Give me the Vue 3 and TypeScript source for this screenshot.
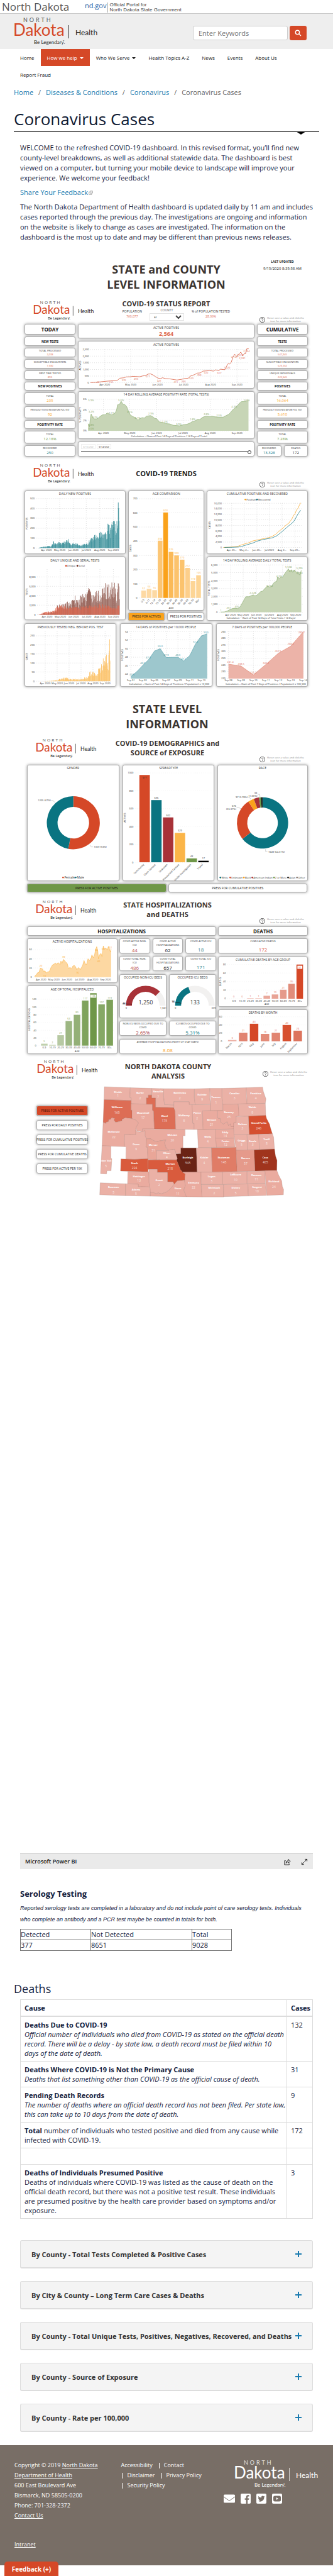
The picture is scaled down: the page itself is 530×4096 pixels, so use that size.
<script setup lang="ts">
import { h, ref } from 'vue'

/* Charts are plotted on a fine grid: one unit is KX pixels wide and KY pixels high. */
const KX = 0.338
const KY = 0.225

type Shape =
  | { t: 'line'; pts: string; c: string }
  | { t: 'area'; pts: string; base: number; c: string; fill: string }
  | { t: 'bar'; x: number; y: number; w: number; base: number; c: string; o?: number }
  | { t: 'ring'; cx: number; cy: number; r: number; r2: number; from: number; to: number; c: string }
  | { t: 'dot'; x: number; y: number; c: string }
type Mark = { x: number; y: number; s: string; c?: string; size?: number; rot?: number; anchor?: string; bold?: boolean; o?: number }
interface Spec {
  frame: [number, number, number, number]
  title: string
  titleY: number
  titleX?: number
  titleSize?: number
  span?: [number, number]
  rise?: [number, number]
  rows?: [number, string][]
  cols?: [number, string][]
  colY?: number
  rot?: number
  solid?: boolean
  shapes: Shape[]
  marks?: Mark[]
}

const Chart = (props: { spec: Spec }) => {
  const s = props.spec
  const [fx, fy, fw, fh] = s.frame
  const X = (x: number) => +((x - fx) * KX).toFixed(2)
  const Y = (y: number) => +((y - fy) * KY).toFixed(2)
  const map = (pts: string) => pts.split(' ').map((p) => { const [a, b] = p.split(',').map(Number); return `${X(a)},${Y(b)}` })
  const text = (m: Mark) => {
    const size = m.size ?? 4
    const x = X(m.x)
    const y = Y(m.y) + (m.rot ? 0 : size * 0.36)
    return h('text', {
      x, y, 'font-size': size, fill: m.c ?? '#333', 'text-anchor': m.anchor ?? 'middle', opacity: m.o ?? 1,
      'font-weight': m.bold ? 700 : 400, transform: m.rot ? `rotate(${m.rot} ${x} ${y})` : undefined,
    }, m.s)
  }
  const out: any[] = []
  const [px0, px1] = s.span ?? [0, 0]
  for (const [y, label] of s.rows ?? []) {
    out.push(h('line', { class: s.solid ? 'grid faint' : 'grid', x1: X(px0), x2: X(px1), y1: Y(y), y2: Y(y) }))
    out.push(text({ x: px0 - 7, y, s: label, anchor: 'end' }))
  }
  for (const [x, label] of s.cols ?? []) {
    if (s.rise) out.push(h('line', { class: 'grid', x1: X(x), x2: X(x), y1: Y(s.rise[0]), y2: Y(s.rise[1]) }))
    out.push(text({ x, y: s.colY ?? 0, s: label, rot: s.rot, anchor: s.rot ? 'end' : 'middle' }))
  }
  for (const g of s.shapes) {
    if (g.t === 'line') out.push(h('polyline', { points: map(g.pts).join(' '), fill: 'none', stroke: g.c, 'stroke-width': 0.7 }))
    else if (g.t === 'area') {
      const p = map(g.pts)
      const x0 = p[0].split(',')[0]
      const x1 = p[p.length - 1].split(',')[0]
      out.push(h('polygon', { points: `${x0},${Y(g.base)} ${p.join(' ')} ${x1},${Y(g.base)}`, fill: g.fill }))
      out.push(h('polyline', { points: p.join(' '), fill: 'none', stroke: g.c, 'stroke-width': 0.6 }))
    } else if (g.t === 'bar') out.push(h('rect', { x: X(g.x), y: Y(g.y), width: g.w * KX, height: Math.max(0, (g.base - g.y) * KY), fill: g.c, opacity: g.o ?? 1 }))
    else if (g.t === 'dot') out.push(h('circle', { cx: X(g.x), cy: Y(g.y), r: 1.3, fill: g.c }))
    else {
      const pt = (deg: number, r: number) => {
        const a = (deg * Math.PI) / 180
        return `${(X(g.cx) + r * Math.sin(a)).toFixed(2)} ${(Y(g.cy) - r * Math.cos(a)).toFixed(2)}`
      }
      const big = g.to - g.from > 180 ? 1 : 0
      out.push(h('path', { d: `M${pt(g.from, g.r)}A${g.r} ${g.r} 0 ${big} 1 ${pt(g.to, g.r)}L${pt(g.to, g.r2)}A${g.r2} ${g.r2} 0 ${big} 0 ${pt(g.from, g.r2)}Z`, fill: g.c }))
    }
  }
  for (const m of s.marks ?? []) out.push(text(m))
  if (s.title) out.push(text({ x: s.titleX ?? fx + fw / 2, y: s.titleY, s: s.title, size: s.titleSize ?? 5 }))
  return h('svg', { class: 'chart', viewBox: `0 0 ${(fw * KX).toFixed(1)} ${(fh * KY).toFixed(1)}`, role: 'img', 'aria-label': s.title }, out)
}

const Logo = (props: { tone?: string }) => {
  const white = props.tone === 'white'
  return h('svg', { class: 'nd-logo', viewBox: '0 0 134 46', role: 'img', 'aria-label': 'North Dakota Health' }, [
    h('text', { x: 15, y: 7, class: 'l-north', fill: white ? '#e6e2df' : '#555' }, 'NORTH'),
    h('text', { x: -1, y: 29, class: 'l-name', fill: white ? '#fff' : '#d54827' }, 'Dakota'),
    h('line', { x1: 87.5, x2: 87.5, y1: 12, y2: 33, stroke: white ? '#d8d3cf' : '#333', 'stroke-width': 1 }),
    h('text', { x: 98, y: 28, class: 'l-dept', fill: white ? '#fff' : '#222' }, 'Health'),
    h('text', { x: 32, y: 42, class: 'l-tag', fill: white ? '#fff' : '#222' }, 'Be Legendary.'),
    h('text', { x: 78, y: 38, class: 'l-tm', fill: white ? '#fff' : '#222' }, '™'),
  ])
}

const Help = () =>
  h('div', { class: 'help' }, [
    h('svg', { class: 'help-icon', viewBox: '0 0 20 20', 'aria-hidden': 'true' }, [
      h('circle', { cx: 10, cy: 10, r: 9, fill: '#fff', stroke: '#222', 'stroke-width': 1.6 }),
      h('path', { d: 'M7.2 7.8a2.8 2.8 0 1 1 4.4 2.3c-1 .7-1.6 1.1-1.6 2.2M10 14v1.6', fill: 'none', stroke: '#222', 'stroke-width': 1.5 }),
    ]),
    h('p', ['Hover over a value and click the', h('br'), 'icon for more information']),
  ])

const marks = (list: string, c?: string, size?: number): Mark[] =>
  list.split(' ').map((m) => { const [x, y, s] = m.split('|'); return { x: +x, y: +y, s, c, size } })
const months = (xs: number[]): [number, string][] =>
  xs.map((x, i) => [x, ['Apr', 'May', 'Jun', 'Jul', 'Aug', 'Sep'][i] + ' 2020'])

/* Daily columns follow a ceiling curve; `low` is how deep the quiet days fall. */
const daily = (ceiling: string, base: number, step: number, low: number, c: string, seed: number): Shape[] => {
  const p = ceiling.split(' ').map((s) => s.split(',').map(Number))
  const out: Shape[] = []
  let i = 0
  for (let x = p[0][0]; x < p[p.length - 1][0]; x += step, i++) {
    const k = Math.max(1, p.findIndex((q) => q[0] >= x))
    const [ax, ay] = p[k - 1]
    const [bx, by] = p[k]
    const top = ay + ((by - ay) * (x - ax)) / (bx - ax)
    const n = Math.abs(Math.sin(i * 12.9898 + seed) * 43758.5453) % 1
    const f = low + (1 - low) * n
    out.push({ t: 'bar', x, y: base - (base - top) * f, w: step, base, c, o: n > 0.6 ? 0.95 : 0.72 })
  }
  return out
}
const columns = (x0: number, pitch: number, w: number, base: number, unit: number, values: number[], colors: string[], markColor: string): { shapes: Shape[]; marks: Mark[] } => ({
  shapes: values.map((v, i) => ({ t: 'bar', x: x0 + i * pitch, y: base - v * unit, w, base, c: colors[i] })),
  marks: values.map((v, i) => ({ x: x0 + i * pitch + w / 2, y: base - v * unit - 16, s: String(v), c: markColor })),
})

const RED = '#d54827', TEAL = '#0a7481', GREEN = '#6f9748', AMBER = '#faa21b', WINE = '#a83238'

const active: Spec = {
  frame: [368, 374, 829, 336], title: 'ACTIVE POSITIVES', titleY: 400,
  span: [427, 1172], rise: [432, 669], colY: 684,
  rows: [[435, '2,500'], [482, '2,000'], [528, '1,500'], [576, '1,000'], [622, '500'], [669, '0']],
  cols: months([494, 616, 742, 865, 991, 1115]),
  shapes: [{ t: 'line', c: RED, pts: '427,668 460,665 490,660 520,656 545,654 555,650 565,637 585,634 595,628 615,627 625,624 650,626 658,627 675,620 688,617 697,608 710,607 720,614 733,627 743,636 755,640 765,634 780,640 800,642 820,647 833,650 855,645 870,639 887,637 895,623 915,612 930,601 943,600 955,587 975,585 985,583 1005,587 1015,578 1030,584 1037,573 1050,576 1058,577 1065,555 1073,535 1080,538 1088,525 1095,492 1104,468 1115,485 1125,464 1133,453 1142,480 1150,462 1155,465 1161,430 1170,430' }],
  marks: [
    ...marks('462|665|40 523|665|132 584|650|376 641|642|490 697|624|671 750|656|321 828|665|211 864|660|300 901|638|520 938|615|769 970|600|922 1032|602|917 1068|564|1,320 1103|487|2,147 1130|472|2,312 1140|497|2,031 1160|447|2,564', '#dd6b55'),
    { x: 384, y: 548, s: 'ACTIVES', rot: -90 },
  ],
}
const positivity: Spec = {
  frame: [368, 726, 829, 338], title: '14 DAY ROLLING AVERAGE POSITIVITY RATE (TOTAL TESTS)', titleY: 751,
  span: [416, 1172], rise: [783, 1005], colY: 1020,
  rows: [[783, '6%'], [857, '4%'], [931, '2%'], [1005, '0%']],
  cols: months([488, 611, 738, 862, 989, 1115]),
  shapes: [{ t: 'area', base: 1005, c: '#84a868', fill: '#c7d5b6', pts: '416,955 422,978 426,920 430,887 436,905 444,921 455,921 463,917 470,906 483,893 497,892 505,879 515,888 527,892 538,886 545,873 550,855 554,822 563,819 571,797 580,818 588,820 597,835 605,865 614,893 625,904 640,914 650,930 660,918 670,912 680,915 690,902 708,898 718,904 728,917 738,920 750,942 765,946 780,954 800,957 815,966 845,970 865,962 880,959 895,950 905,940 915,938 930,924 940,926 955,909 970,902 990,905 997,902 1008,906 1030,909 1050,909 1065,897 1078,888 1092,862 1104,846 1115,832 1125,813 1135,800 1150,798 1160,795 1169,794' }],
  marks: [
    ...marks('430|791|5.9% 571|791|5.6% 431|872|3.2% 448|909|2.2% 525|879|3.1% 612|876|3.1% 648|915|2.1% 711|884|2.9% 776|939|1.4% 842|957|0.9% 907|924|1.8% 972|887|2.8% 1031|897|2.5% 1102|834|4.3% 1162|791|5.8% 430|963|0.8% 430|990|0.0%', '#7fa35f'),
    { x: 384, y: 893, s: '% POSITIVITY', rot: -90 },
    { x: 796, y: 1044, s: 'Calculation = (Sum of Past 14 Days of Positives / 14 Days of Tests)' },
  ],
}
const newPositives: Spec = {
  frame: [117, 225, 474, 446], title: 'DAILY NEW POSITIVES', titleY: 249,
  span: [171, 564], rise: [282, 630], colY: 644,
  rows: [[282, '500'], [351, '400'], [420, '300'], [491, '200'], [561, '100'], [630, '0']],
  cols: months([220, 282, 346, 407, 470, 534]),
  shapes: daily('180,630 190,625 205,618 240,614 248,600 253,566 258,605 270,578 290,595 305,580 320,562 330,600 352,585 375,612 400,598 415,590 421,560 440,545 450,520 465,515 483,505 494,490 502,550 508,440 515,455 520,500 527,370 531,470 535,380 541,385 546,510 550,395 554,420 556,300 558,330 562,468', 630, 2.1, 0.5, '#0a7481', 1),
  marks: [{ x: 131, y: 458, s: 'POSITIVES', rot: -90 }],
}
const ages = [52, 64, 55, 404, 603, 325, 300, 270, 212, 119, 160]
const ageBars = columns(665, 25.6, 22, 976, 0.991, ages, ['#fdd9a3', '#fdd9a3', '#fdd9a3', '#fcc675', AMBER, '#fbba58', '#fcc36d', '#fcc36d', '#fdcf8b', '#fdd595', '#fdd595'], '#fbb040')
const ageCompare: Spec = {
  frame: [604, 225, 356, 838], title: 'AGE COMPARISON', titleY: 249, span: [654, 952], colY: 990, rot: -50,
  rows: [[282, '700'], [381, '600'], [480, '500'], [580, '400'], [679, '300'], [777, '200'], [877, '100'], [976, '0']],
  cols: ['0-5', '6-11', '12-14', '15-19', '20-29', '30-39', '40-49', '50-59', '60-69', '70-79', '80+'].map((s, i) => [680 + i * 25.6, s]),
  shapes: ageBars.shapes,
  marks: [...ageBars.marks, { x: 620, y: 630, s: 'CASES', rot: -90 }, { x: 805, y: 1044, s: 'AGE' }],
}
const cumulative: Spec = {
  frame: [972, 225, 473, 446], title: 'CUMULATIVE POSITIVES AND RECOVERED', titleY: 249,
  span: [1050, 1416], rise: [314, 625], colY: 644,
  rows: [[314, '16,000'], [353, '14,000'], [392, '12,000'], [431, '10,000'], [470, '8,000'], [509, '6,000'], [548, '4,000'], [587, '2,000'], [625, '0']],
  cols: [[1089, 'Apr 20…'], [1147, 'May 2…'], [1207, 'Jun 20…'], [1265, 'Jul 2020'], [1325, 'Aug 2…'], [1385, 'Sep 20…']],
  shapes: [
    { t: 'line', c: AMBER, pts: '1050,625 1080,623 1100,620 1120,616 1133,608 1150,600 1168,593 1188,579 1205,574 1235,564 1262,556 1278,548 1295,532 1310,512 1330,488 1345,466 1357,454 1362,442 1370,428 1378,403 1386,387 1393,360 1400,350 1406,328 1412,312' },
    { t: 'line', c: TEAL, pts: '1055,625 1090,624 1120,622 1135,618 1150,611 1170,602 1190,593 1207,581 1235,570 1255,564 1280,557 1300,543 1320,520 1340,494 1360,468 1375,450 1385,430 1395,402 1403,382 1412,363' },
    { t: 'dot', x: 1153, y: 288, c: AMBER }, { t: 'dot', x: 1208, y: 288, c: TEAL },
  ],
  marks: [{ x: 990, y: 468, s: 'CASES', rot: -90 }, { x: 1158, y: 288, s: 'Positives', anchor: 'start' }, { x: 1213, y: 288, s: 'Recovered', anchor: 'start' }],
}
const tests: Spec = {
  frame: [117, -89, 474, 450], title: 'DAILY UNIQUE AND SERIAL TESTS', titleY: -62,
  span: [176, 564], rise: [0, 320], colY: 336,
  rows: [[54, '8,000'], [120, '6,000'], [186, '4,000'], [253, '2,000'], [321, '0']],
  cols: months([223, 285, 348, 409, 471, 534]),
  shapes: [
    ...daily('190,320 205,310 265,290 270,250 285,248 295,233 315,226 330,235 345,205 355,180 362,215 370,205 380,172 400,178 422,118 432,150 445,130 460,165 470,120 485,125 494,83 500,120 508,62 516,115 525,55 532,120 541,75 548,160 556,2 558,40 562,180', 321, 2.1, 0.42, '#7c3a2d', 4),
    ...daily('180,320 190,315 205,302 220,298 235,292 255,290 270,255 290,250 310,258 330,270 350,262 380,262 410,242 440,256 470,240 500,250 530,262 562,250', 321, 2.1, 0.55, '#e2674e', 2),
    { t: 'dot', x: 312, y: -24, c: RED }, { t: 'dot', x: 365, y: -24, c: '#6a2315' },
  ],
  marks: [{ x: 131, y: 160, s: 'TESTS', rot: -90 }, { x: 317, y: -24, s: 'Unique', anchor: 'start' }, { x: 370, y: -24, s: 'Serial', anchor: 'start' }],
}
const rolling: Spec = {
  frame: [972, -89, 473, 450], title: '14 DAY ROLLING AVERAGE DAILY TOTAL TESTS', titleY: -62,
  span: [1030, 1422], rise: [-30, 302], colY: 318,
  rows: [[-30, '6,000'], [24, '5,000'], [81, '4,000'], [135, '3,000'], [191, '2,000'], [247, '1,000'], [302, '0']],
  cols: months([1084, 1143, 1205, 1265, 1327, 1389]),
  shapes: [{ t: 'area', base: 302, c: '#84a868', fill: '#c7d5b6', pts: '1037,301 1055,300 1070,292 1080,284 1095,275 1110,275 1115,277 1125,270 1132,255 1145,220 1155,193 1170,193 1180,186 1190,180 1197,186 1205,184 1215,172 1225,156 1233,155 1245,134 1258,117 1265,125 1275,122 1283,102 1290,90 1300,85 1304,54 1312,65 1322,52 1327,56 1338,30 1348,10 1355,-3 1361,18 1368,3 1375,22 1383,5 1390,20 1400,18 1408,40 1415,8' }],
  marks: [
    ...marks('1038|288|1 1075|273|251 1113|262|405 1188|164|2,228 1266|115|3,154 1312|51|4,292 1355|-18|5,508 1372|12|5,091 1407|-6|5,295 1407|28|4,765', '#7fa35f'),
    { x: 988, y: 135, s: 'TOTAL TESTS', rot: -90 },
    { x: 1226, y: 342, s: 'Calculation = (Sum of Past 14 Days of Total Tests / 14 Days)' },
  ],
}
const prevNeg: Spec = {
  frame: [117, 377, 431, 449], title: 'PREVIOUSLY TESTED NEG. BEFORE POS. TEST', titleY: 403,
  span: [171, 520], rise: [435, 785], colY: 801,
  rows: [[465, '250'], [529, '200'], [593, '150'], [657, '100'], [720, '50'], [785, '0']],
  cols: months([214, 270, 326, 382, 438, 495]),
  shapes: daily('205,785 240,782 270,776 285,765 305,756 330,766 360,768 380,768 400,755 415,745 421,708 440,712 460,700 467,690 472,635 480,670 488,575 492,660 497,562 503,580 506,690 510,580 514,432 516,500 519,610', 785, 2, 0.4, '#fbb13f', 3),
  marks: [{ x: 131, y: 610, s: 'CASES', rot: -90 }],
}
const per10k: Spec = {
  frame: [566, 377, 432, 449], title: '14 DAYS of POSITIVES per 10,000 PEOPLE', titleY: 403,
  span: [610, 982], rise: [435, 767], colY: 779,
  rows: [[435, '54'], [495, '52'], [556, '50'], [616, '48'], [676, '46'], [736, '44']],
  cols: [[617, 'Sep 01'], [673, 'Sep 03'], [728, 'Sep 05'], [783, 'Sep 07'], [838, 'Sep 09'], [894, 'Sep 11'], [949, 'Sep 13']],
  shapes: [{ t: 'area', base: 767, c: '#4a9ba6', fill: '#9dc7cd', pts: '617,753 645,718 673,674 700,634 728,573 755,556 783,619 838,616 866,643 894,604 921,522 949,466 976,451' }],
  marks: [
    ...marks('623|738|43.5 672|660|46.0 699|621|47.3 755|540|50.0 783|603|47.9 838|603|48.0 865|629|47.1 921|510|51.2 971|443|53.5', '#3b929d'),
    { x: 581, y: 601, s: 'POSITIVES', rot: -90 },
    { x: 797, y: 807, s: 'Calculation = (Sum of Past 14 Days of Positives / Population) x 10,000' },
  ],
}
const per100k: Spec = {
  frame: [1015, 377, 432, 449], title: '7 DAYS of POSITIVES per 100,000 PEOPLE', titleY: 403,
  span: [1066, 1430], rise: [435, 766], colY: 779,
  rows: [[435, '290'], [482, '280'], [529, '270'], [576, '260'], [624, '250'], [672, '240'], [717, '230'], [765, '220']],
  cols: [[1073, 'Sep 08'], [1132, 'Sep 09'], [1190, 'Sep 10'], [1249, 'Sep 11'], [1307, 'Sep 12'], [1366, 'Sep 13'], [1424, 'Sep 14']],
  shapes: [{ t: 'area', base: 767, c: '#e27f6a', fill: '#ecb3a8', pts: '1073,665 1132,679 1190,741 1249,667 1307,589 1366,538 1425,436' }],
  marks: [
    ...marks('1082|651|241.4 1132|663|238.5 1190|726|225.2 1249|657|240.2 1307|576|257.5 1366|522|268.5 1416|443|289.7', '#e0705a'),
    { x: 1030, y: 601, s: 'POSITIVES', rot: -90 },
    { x: 1248, y: 807, s: 'Calculation = (Sum of Past 7 Days of Positives / Population) x 100,000' },
  ],
}
const gender: Spec = {
  frame: [127, 546, 432, 819], title: 'GENDER', titleY: 571,
  shapes: [
    { t: 'ring', cx: 344, cy: 954, r: 42, r2: 25, from: 0, to: 191, c: RED },
    { t: 'ring', cx: 344, cy: 954, r: 42, r2: 25, from: 191, to: 360, c: TEAL },
    { t: 'line', c: '#bbb', pts: '240,798 249,798 258,812' }, { t: 'line', c: '#bbb', pts: '421,1110 428,1124 436,1124' },
    { t: 'dot', x: 296, y: 1339, c: RED }, { t: 'dot', x: 355, y: 1339, c: TEAL },
  ],
  marks: [
    { x: 238, y: 798, s: '1205 (47%)', anchor: 'end' }, { x: 440, y: 1125, s: '1359 (53%)', anchor: 'start' },
    { x: 302, y: 1340, s: 'Female', anchor: 'start', size: 5 }, { x: 361, y: 1340, s: 'Male', anchor: 'start', size: 5 },
  ],
}
const spreadBars = columns(655, 55.2, 49, 1232, 0.6285, [977, 696, 502, 329, 43, 17], [RED, TEAL, WINE, '#fbb548', GREEN, '#000'], '#333')
spreadBars.marks[0].y = 636
const spread: Spec = {
  frame: [576, 546, 432, 819], title: 'SPREADTYPE', titleY: 571, span: [634, 998], colY: 1250, rot: -45, solid: true,
  rows: [[603, '1000'], [729, '800'], [855, '600'], [981, '400'], [1107, '200'], [1233, '0']],
  cols: ['Community', 'Close Contact', 'Unknown', 'Household Contact', 'Under Investigation', 'Travel'].map((s, i) => [678 + i * 55.2, s]),
  shapes: spreadBars.shapes,
  marks: [...spreadBars.marks, { x: 592, y: 918, s: 'ACTIVES', rot: -90 }],
}
const raceCuts: [number, number, string][] = [[0, 231.5, TEAL], [231.5, 326.5, RED], [326.5, 340, AMBER], [340, 352, WINE], [352, 356.5, GREEN], [356.5, 360, '#111']]
const race: Spec = {
  frame: [1023, 546, 424, 819], title: 'RACE', titleY: 571,
  shapes: [
    ...raceCuts.map(([from, to, c]): Shape => ({ t: 'ring', cx: 1235, cy: 956, r: 40.7, r2: 24.3, from, to, c })),
    { t: 'line', c: '#bbb', pts: '1113,847 1124,847 1134,858' }, { t: 'line', c: '#bbb', pts: '1167,774 1174,776 1180,790' },
    { t: 'line', c: '#bbb', pts: '1213,755 1222,755 1223,772' }, { t: 'line', c: '#bbb', pts: '1249,1142 1250,1160 1258,1160' },
    ...([[1037, TEAL], [1083, RED], [1147, AMBER], [1187, WINE], [1289, GREEN], [1355, '#111'], [1397, '#8a7a72']] as [number, string][]).map(([x, c]): Shape => ({ t: 'dot', x, y: 1341, c })),
  ],
  marks: [
    { x: 1210, y: 744, s: '34', anchor: 'end' }, { x: 1210, y: 766, s: '(1.33%)', anchor: 'end' }, { x: 1165, y: 774, s: '97 (3.78%)', anchor: 'end' },
    { x: 1111, y: 837, s: '676', anchor: 'end' }, { x: 1111, y: 858, s: '(26.37%)', anchor: 'end' }, { x: 1262, y: 1161, s: '1649 (64.31%)', anchor: 'start' },
    ...([[1042, 'White'], [1088, 'Unknown'], [1152, 'Black'], [1192, 'American Indian'], [1294, '2 or More'], [1360, 'Asian'], [1402, 'Other']] as [number, string][]).map(([x, s]): Mark => ({ x, y: 1341, s, anchor: 'start' })),
  ],
}
const hospital: Spec = {
  frame: [127, 363, 427, 316], title: 'ACTIVE HOSPITALIZATIONS', titleY: 388, span: [157, 528], colY: 654, solid: true,
  rows: [[443, '60'], [508, '40'], [573, '20'], [638, '0']], cols: months([193, 254, 316, 376, 437, 498]),
  shapes: [{ t: 'area', base: 638, c: '#fbb13f', fill: '#fdd8a2', pts: '164,636 165,628 172,618 178,605 183,606 190,574 200,580 205,596 212,594 217,608 225,600 230,600 235,590 240,570 247,552 255,545 262,538 268,548 273,535 283,548 287,524 292,540 299,512 308,528 317,542 323,578 330,568 337,580 343,560 350,555 355,562 362,585 370,570 378,584 385,568 390,552 396,520 402,545 408,548 415,508 422,520 430,500 433,480 440,500 446,478 451,440 456,422 461,452 464,508 470,478 476,470 481,492 487,417 492,440 498,430 506,445 511,420 518,448 521,460 524,438' }],
  marks: marks('192|559|20 210|627|10 300|495|39 365|606|16 455|444|66 465|527|40 487|438|68 521|430|62', '#faa932'),
}
const hospAge = columns(193, 38.6, 31, 1118, 2.73, [5, 2, 27, 64, 80, 117, 136, 107, 119], ['#c0d0ad', '#c0d0ad', '#b7c9a3', '#9db783', '#94b077', '#7fa35c', GREEN, '#86a866', '#7da159'], '#7fa35f')
hospAge.shapes.push({ t: 'bar', x: 426, y: 757, w: 28, base: 778, c: '#fff' })
hospAge.marks[6].y = 768
const hospitalAge: Spec = {
  frame: [127, 692, 427, 485], title: 'AGE OF TOTAL HOSPITALIZED', titleY: 718, span: [178, 538], colY: 1133, solid: true,
  rows: [[790, '120'], [845, '100'], [900, '80'], [954, '60'], [1009, '40'], [1064, '20'], [1119, '0']],
  cols: ['0-9', '10-19', '20-29', '30-39', '40-49', '50-59', '60-69', '70-79', '80+'].map((s, i) => [208 + i * 38.6, s]),
  shapes: hospAge.shapes,
  marks: [...hospAge.marks, { x: 142, y: 933, s: 'HOSPITALIZATIONS', rot: -90 }, { x: 364, y: 1157, s: 'AGE' }],
}
const gauge = (x: number, cx: number, title: string, share: number, tick: number, c: string, value: string, max: string, low: string): Spec => ({
  frame: [x, 616, 222, 309], title, titleY: 638,
  shapes: [
    { t: 'ring', cx, cy: 838, r: 31.5, r2: 22, from: -90, to: 90, c: '#f2f1f0' },
    { t: 'ring', cx, cy: 838, r: 31.5, r2: 22, from: -90, to: -90 + 180 * share, c },
    { t: 'ring', cx, cy: 838, r: 31.5, r2: 22, from: -90.5 + 180 * tick, to: -89 + 180 * tick, c: '#111' },
  ],
  marks: [
    { x: cx, y: 815, s: value, size: 9 }, { x: cx - 92, y: 854, s: '0' }, { x: cx + 98, y: 854, s: max, anchor: 'end' },
    { x: cx - 96, y: low === '44' ? 822 : 808, s: low, bold: true, anchor: 'end' },
  ],
})
const gaugeA = gauge(564, 688, 'OCCUPIED NON-ICU BEDS', 0.7526, 0.0265, WINE, '1,250', '1,661', '44')
const gaugeB = gauge(798, 920, 'OCCUPIED ICU BEDS', 0.392, 0.053, TEAL, '133', '339', '18')
const dAge = columns(1089, 38.8, 31, 785, 3.02, [0, 0, 1, 1, 7, 10, 21, 35, 80], ['#ecb1a6', '#ecb1a6', '#ecb1a6', '#ecb1a6', '#eaa99c', '#e8a395', '#e59a8b', '#e18c7a', RED], '#e0705a')
dAge.shapes.push({ t: 'bar', x: 1404, y: 552, w: 23, base: 574, c: '#fff' })
dAge.marks[8].y = 563
dAge.marks[8].s = '97'
const deathsAge: Spec = {
  frame: [1030, 487, 423, 357], title: 'CUMULATIVE DEATHS BY AGE GROUP', titleY: 511, span: [1074, 1446], colY: 800, solid: true,
  rows: [[543, '80'], [603, '60'], [664, '40'], [724, '20'], [784, '0']],
  cols: ['0-9', '10-19', '20-29', '30-39', '40-49', '50-59', '60-69', '70-79', '80+'].map((s, i) => [1105 + i * 38.8, s]),
  shapes: dAge.shapes,
  marks: [...dAge.marks, { x: 1046, y: 665, s: 'DEATHS', rot: -90 }, { x: 1260, y: 825, s: 'AGE' }],
}
const dMonth = columns(1077, 51.4, 40, 1086, 2.87, [3, 21, 43, 18, 21, 40, 26], ['#ecb1a6', '#e18471', RED, '#e38c79', '#e18471', '#d7502f', '#dd745d'], '#e0604a')
const deathsMonth: Spec = {
  frame: [1030, 861, 423, 316], title: 'DEATHS BY MONTH', titleY: 884, span: [1056, 1446], colY: 1104, rot: -45, solid: true,
  rows: [[913, '60'], [971, '40'], [1028, '20'], [1086, '0']],
  cols: ['March', 'April', 'May', 'June', 'July', 'August', 'September'].map((s, i) => [1096 + i * 51.4, s]),
  shapes: dMonth.shapes, marks: dMonth.marks,
}

type Stat = { label: string; value?: string; tone?: string }
const today: Stat[] = [
  { label: 'TODAY', tone: 'big' }, { label: 'NEW TESTS', tone: 'head' },
  { label: 'TOTAL PROCESSED', value: '2,038', tone: 'red' }, { label: 'SUSCEPTIBLE ENCOUNTERS', value: '1,930', tone: 'red' },
  { label: 'FIRST TIME TESTED', value: '890', tone: 'red' }, { label: 'NEW POSITIVES', tone: 'head' },
  { label: 'TOTAL', value: '235', tone: 'amber mid' }, { label: 'PREVIOUSLY TESTED NEG BEFORE POS. TEST', value: '92', tone: 'amber mid tight' },
  { label: 'POSITIVITY RATE', tone: 'head' }, { label: 'TOTAL', value: '12.18%', tone: 'green mid' }, { label: 'RECOVERED', value: '250', tone: 'teal mid' },
]
const overall: Stat[] = [
  { label: 'CUMULATIVE', tone: 'big' }, { label: 'TESTS', tone: 'head' },
  { label: 'TOTAL PROCESSED', value: '547,945', tone: 'red' }, { label: 'SUSCEPTIBLE ENCOUNTERS', value: '529,202', tone: 'red' },
  { label: 'UNIQUE INDIVIDUALS', value: '220,645', tone: 'red' }, { label: 'POSITIVES', tone: 'head' },
  { label: 'TOTAL', value: '16,064', tone: 'amber mid' }, { label: 'PREVIOUSLY TESTED NEG BEFORE POS. TEST', value: '5,610', tone: 'amber mid tight' },
  { label: 'POSITIVITY RATE', tone: 'head' }, { label: 'TOTAL', value: '7.28%', tone: 'green mid' },
]
const beds: Stat[] = [
  { label: 'COVID ACTIVE NON-ICU', value: '44', tone: 'rose' }, { label: 'COVID ACTIVE HOSPITALIZATIONS', value: '62', tone: 'dark' }, { label: 'COVID ACTIVE ICU', value: '18', tone: 'sea' },
  { label: 'COVID TOTAL NON-ICU', value: '486', tone: 'rose' }, { label: 'COVID TOTAL HOSPITALIZATIONS', value: '657', tone: 'dark' }, { label: 'COVID TOTAL ICU', value: '171', tone: 'sea' },
]

/* name | value | label x | label y | outline | fill */
const L = '#ebb1a6', M = '#eaab9f'
const counties: [string, string, number, number, string, string][] = [
  ['Divide', '1', 556, 302, '492,264 614,271 612,340 618,342 618,362 490,355', L],
  ['Burke', '2', 660, 308, '614,271 715,276 715,323 699,323 699,343 690,343 690,388 618,385 618,342 612,340', L],
  ['Renville', '7', 745, 300, '715,276 771,278 771,330 775,390 819,393 819,412 733,409 733,345 715,345', L],
  ['Bottineau', '2', 847, 308, '771,278 916,279 916,345 920,391 891,390 891,370 819,370 819,393 775,390 771,330', L],
  ['Rolette', '9', 952, 320, '916,279 988,276 988,345 992,389 920,391 916,345', L],
  ['Towner', '1', 1018, 340, '988,276 1046,276 1046,345 1050,388 1050,433 992,433 992,345', L],
  ['Cavalier', '3', 1105, 311, '1046,276 1160,271 1160,325 1164,385 1050,388 1046,345', L],
  ['Pembina', '4', 1205, 311, '1160,271 1237,266 1241,300 1253,350 1250,382 1164,385', L],
  ['Williams', '165', 552, 410, '490,355 618,362 618,430 622,430 622,490 590,484 575,495 575,505 545,517 537,500 540,488 527,485 520,495 512,498 512,510 500,517 500,525 486,515', '#dd6d55'],
  ['Mountrail', '17', 674, 449, '618,385 718,388 718,430 724,435 727,562 671,563 671,583 645,575 640,555 652,520 640,500 622,490 622,430 618,430', M],
  ['Ward', '175', 775, 470, '699,323 715,323 715,345 733,345 733,409 819,412 825,435 828,565 727,562 724,435 718,430 718,388 690,388 690,343 699,343', '#dd6d55'],
  ['McHenry', '8', 867, 467, '819,370 891,370 891,390 905,391 908,430 908,522 914,523 914,566 828,565 825,435 819,412', L],
  ['Pierce', '2', 929, 450, '905,391 992,391 992,433 954,435 957,566 914,566 914,523 908,522', L],
  ['Benson', '21', 997, 497, '954,435 1025,434 1025,485 1040,490 1040,515 1052,528 1070,512 1077,538 1085,525 1088,545 1101,545 1101,563 957,566', M],
  ['Ramsey', '25', 1078, 444, '1050,388 1122,387 1126,430 1126,472 1112,475 1112,517 1101,519 1101,545 1088,545 1085,525 1077,538 1070,512 1052,528 1040,515 1040,490 1025,485 1025,434 1050,433', M],
  ['Walsh', '9', 1189, 410, '1122,387 1164,385 1250,382 1252,467 1170,472 1126,472', L],
  ['Grand Forks', '246', 1219, 521, '1170,472 1252,467 1256,490 1270,530 1275,560 1283,597 1174,602', '#d54f30'],
  ['Nelson', '3', 1142, 530, '1112,475 1170,472 1174,602 1103,604 1101,519 1112,517', L],
  ['McKenzie', '22', 536, 583, '486,515 500,525 500,517 512,510 512,498 520,495 527,485 540,488 537,500 545,517 575,505 575,495 590,484 622,490 640,500 652,520 640,555 640,603 588,601 586,688 481,682', M],
  ['McLean', '26', 812, 605, '671,563 828,565 872,566 872,610 862,610 862,695 852,697 852,738 829,738 822,706 795,712 783,700 775,660 782,640 770,643 733,653 710,633 690,632 683,610 683,575 671,583', M],
  ['Dunn', '9', 642, 671, '588,601 640,603 640,570 645,580 660,585 683,575 683,610 690,632 688,690 695,693 697,773 634,778 593,775 594,689 586,688', L],
  ['Mercer', '31', 722, 678, '690,632 710,633 733,653 770,643 782,640 775,660 783,700 795,712 795,716 737,716 737,780 697,778 695,693 688,690', '#e9a698'],
  ['Oliver', '4', 786, 735, '737,716 795,716 795,712 822,706 829,738 836,770 832,781 737,779', L],
  ['Wells', '4', 979, 617, '930,567 1016,566 1020,693 934,695', L],
  ['Eddy', '14', 1061, 586, '1016,566 1101,563 1103,626 1016,628', M],
  ['Foster', '12', 1063, 648, '1016,628 1103,628 1107,690 1020,693', M],
  ['Griggs', '5', 1138, 645, '1103,604 1164,603 1166,710 1112,713 1110,690', L],
  ['Steele', '3', 1190, 648, '1164,603 1219,601 1222,707 1166,710', L],
  ['Traill', '8', 1256, 638, '1219,601 1283,597 1289,620 1293,705 1222,707', L],
  ['lden Vall', '5', 500, 787, '481,682 523,684 523,770 527,773 524,858 504,858 502,881 474,879', L],
  ['Stark', '224', 634, 803, '570,774 634,778 697,773 698,866 568,860', '#d95a3c'],
  ['Burleigh', '545', 885, 767, '852,697 925,697 929,868 860,868 850,850 832,785 836,770 829,740 852,738', '#6a2315'],
  ['Kidder', '4', 962, 767, '925,697 996,695 1000,868 929,868', L],
  ['Stutsman', '145', 1054, 764, '996,695 1112,692 1117,863 1000,868', '#e07c66'],
  ['Barnes', '57', 1157, 770, '1112,713 1197,710 1202,860 1117,863', '#e59a8b'],
  ['Cass', '405', 1250, 764, '1197,710 1293,705 1298,755 1305,785 1304,856 1202,860', '#a0341d'],
  ['Morton', '218', 802, 809, '698,781 832,781 850,850 860,868 873,880 870,925 835,930 820,955 816,936 789,935 789,870 741,870 741,848 698,848', '#d95b3d'],
  ['Hettinger', '13', 655, 899, '603,863 702,867 704,950 706,973 651,970 651,953 601,950', M],
  ['Grant', '2', 750, 923, '702,848 741,848 741,870 789,870 789,935 816,936 820,955 800,990 785,1008 760,1022 745,1015 735,1022 722,1010 708,1010 706,973 702,940', L],
  ['Sioux', '11', 838, 983, '820,955 835,930 870,925 873,965 866,995 879,1042 708,1038 708,1010 722,1010 735,1022 745,1015 760,1022 785,1008 800,990', M],
  ['Emmons', '22', 912, 941, '860,868 947,868 948,955 952,1043 879,1042 866,995 873,965 870,925 873,880', M],
  ['Logan', '3', 997, 896, '947,868 1048,868 1048,955 948,955', L],
  ['LaMoure', '10', 1110, 887, '1048,868 1164,862 1164,950 1048,955', L],
  ['Ransom', '11', 1208, 890, '1164,862 1248,860 1250,947 1164,950', L],
  ['Richland', '24', 1290, 935, '1248,858 1304,856 1313,890 1327,930 1330,970 1336,990 1335,1028 1258,1032 1252,947', M],
  ['McIntosh', '2', 1009, 980, '948,955 1053,956 1054,1043 952,1043', L],
  ['Dickey', '5', 1111, 980, '1053,956 1168,951 1170,1037 1054,1041', L],
  ['Sargent', '10', 1211, 974, '1168,951 1250,947 1256,1032 1170,1037', L],
  ['Bowman', '5', 535, 974, '472,943 592,950 592,1034 470,1028', L],
  ['Adams', '5', 641, 992, '592,950 651,953 651,970 706,973 708,1038 592,1034', L],
]
const mx = (x: number) => +((x - 465) * KX).toFixed(1)
const my = (y: number) => +((y - 260) * KY).toFixed(1)
const outline = (pts: string) => pts.split(' ').map((p) => { const [x, y] = p.split(',').map(Number); return `${mx(x)},${my(y)}` }).join(' ')
const closeSet = ['Eddy', 'Foster', 'Griggs', 'Steele', 'Traill', 'Divide', 'Hettinger', 'Adams', 'Oliver', 'Nelson', 'Sargent', 'Ransom']

const nav = ['Home', 'How we help', 'Who We Serve', 'Health Topics A-Z', 'News', 'Events', 'About Us', 'Report Fraud']
const mapModes = ['ACTIVE POSITIVES', 'DAILY POSITIVES', 'CUMULATIVE POSITIVES', 'CUMULATIVE DEATHS', 'ACTIVE PER 10K']
const mapMode = ref('ACTIVE POSITIVES')
const panels = [
  'By County - Total Tests Completed & Positive Cases',
  'By City & County – Long Term Care Cases & Deaths',
  'By County - Total Unique Tests, Positives, Negatives, Recovered, and Deaths',
  'By County - Source of Exposure',
  'By County - Rate per 100,000',
]
const deaths = [
  { head: 'Deaths Due to COVID-19', note: 'Official number of individuals who died from COVID-19 as stated on the official death record. There will be a delay - by state law, a death record must be filed within 10 days of the date of death.', n: '132' },
  { head: 'Deaths Where COVID-19 is Not the Primary Cause', note: 'Deaths that list something other than COVID-19 as the official cause of death.', n: '31' },
  { head: 'Pending Death Records', note: 'The number of deaths where an official death record has not been filed. Per state law, this can take up to 10 days from the date of death.', n: '9' },
]
const keywords = ref('')
const from = ref('3/15/2020')
const until = ref('9/14/2020')
const day = ref(100)
</script>

<template>
  <div class="page">
    <div class="state-bar">
      <span class="state-name">North Dakota</span>
      <a class="ndgov" href="#">nd.gov</a>
      <span class="portal">Official Portal for<br>North Dakota State Government</span>
    </div>
    <header class="site-head">
      <a class="home-logo" href="#"><Logo /></a>
      <form class="search" @submit.prevent>
        <input v-model="keywords" type="text" placeholder="Enter Keywords" aria-label="Enter Keywords">
        <button type="submit" aria-label="Search">
          <svg viewBox="0 0 16 16"><circle cx="6.5" cy="6.5" r="4.6" /><path d="M10 10l4.5 4.5" /></svg>
        </button>
      </form>
    </header>
    <nav class="nav">
      <a v-for="(n, i) in nav" :key="n" href="#" :class="{ on: i === 1 }">{{ n }}<i v-if="i === 1 || i === 2" class="caret"></i></a>
    </nav>
    <div class="crumbs">
      <a href="#">Home</a><span>/</span><a href="#">Diseases &amp; Conditions</a><span>/</span><a href="#">Coronavirus</a><span>/</span><em>Coronavirus Cases</em>
    </div>
    <h1>Coronavirus Cases</h1>

    <section class="intro">
      <p>WELCOME to the refreshed COVID-19 dashboard. In this revised format, you’ll find new<br>county-level breakdowns, as well as additional statewide data. The dashboard is best<br>viewed on a computer, but turning your mobile device to landscape will improve your<br>experience. We welcome your feedback!</p>
      <p><a href="#">Share Your Feedback<svg class="ext" viewBox="0 0 10 10"><path d="M4 3H1v6h6V6M4 1h5v5L7.5 4.5 5 7 3 5l2.5-2.5z" /></svg></a></p>
      <p>The North Dakota Department of Health dashboard is updated daily by 11 am and includes<br>cases reported through the previous day. The investigations are ongoing and information<br>on the website is likely to change as cases are investigated. The information on the<br>dashboard is the most up to date and may be different than previous news releases.</p>
    </section>

    <main class="dash">
      <div class="lead">
        <h2 class="level">STATE and COUNTY<br>LEVEL INFORMATION</h2>
        <div class="updated"><b>LAST UPDATED</b><span>9/15/2020 8:35:58 AM</span></div>
      </div>

      <div class="dash-head first">
        <Logo />
        <div class="mid-head">
          <h3>COVID-19 STATUS REPORT</h3>
          <div class="filters">
            <div class="fact"><span>POPULATION</span><b>760,077</b></div>
            <div class="county"><label for="county">COUNTY</label><select id="county"><option>All</option></select></div>
            <div class="fact"><span>% of POPULATION TESTED</span><b>28.06%</b></div>
          </div>
        </div>
        <Help />
      </div>
      <div class="status">
        <div class="stack">
          <div v-for="(s, i) in today" :key="i" class="card stat" :class="s.tone"><span>{{ s.label }}</span><b v-if="s.value">{{ s.value }}</b></div>
        </div>
        <div class="centre">
          <div class="card now"><span>ACTIVE POSITIVES</span><b>2,564</b></div>
          <div class="card"><Chart :spec="active" /></div>
          <div class="card"><Chart :spec="positivity" /></div>
          <div class="card range">
            <div class="dates"><input v-model="from" class="dim" aria-label="From date"><input v-model="until" aria-label="To date"></div>
            <input v-model="day" type="range" min="0" max="100" aria-label="Date">
          </div>
        </div>
        <div class="stack">
          <div v-for="(s, i) in overall" :key="i" class="card stat" :class="s.tone"><span>{{ s.label }}</span><b v-if="s.value">{{ s.value }}</b></div>
          <div class="pair">
            <div class="card stat teal mid"><span>RECOVERED</span><b>13,328</b></div>
            <div class="card stat dark mid"><span>DEATHS</span><b>172</b></div>
          </div>
        </div>
      </div>

      <div class="dash-head trends-head"><Logo /><h3>COVID-19 TRENDS</h3><Help /></div>
      <div class="trends">
        <div class="col"><div class="card"><Chart :spec="newPositives" /></div><div class="card"><Chart :spec="tests" /></div></div>
        <div class="col">
          <div class="card"><Chart :spec="ageCompare" /></div>
          <div class="toggle"><button class="card amber-on">PRESS FOR ACTIVES</button><button class="card">PRESS FOR POSITIVES</button></div>
        </div>
        <div class="col"><div class="card"><Chart :spec="cumulative" /></div><div class="card"><Chart :spec="rolling" /></div></div>
      </div>
      <div class="thirds">
        <div class="card"><Chart :spec="prevNeg" /></div>
        <div class="card"><Chart :spec="per10k" /></div>
        <div class="card"><Chart :spec="per100k" /></div>
      </div>

      <h2 class="level second">STATE LEVEL<br>INFORMATION</h2>
      <div class="dash-head demo-head"><Logo /><h3>COVID-19 DEMOGRAPHICS and<br>SOURCE of EXPOSURE</h3><Help /></div>
      <div class="thirds demo">
        <div class="card"><Chart :spec="gender" /></div>
        <div class="card"><Chart :spec="spread" /></div>
        <div class="card"><Chart :spec="race" /></div>
      </div>
      <div class="halves"><button class="card green-on">PRESS FOR ACTIVE POSITIVES</button><button class="card">PRESS FOR CUMULATIVE POSITIVES</button></div>

      <div class="dash-head demo-head"><Logo /><h3>STATE HOSPITALIZATIONS<br>and DEATHS</h3><Help /></div>
      <div class="hosp">
        <div class="card bar-title wide">HOSPITALIZATIONS</div>
        <div class="card bar-title">DEATHS</div>
        <div class="col"><div class="card"><Chart :spec="hospital" /></div><div class="card"><Chart :spec="hospitalAge" /></div></div>
        <div class="col spread">
          <div class="beds">
            <div v-for="b in beds" :key="b.label" class="card bed" :class="b.tone"><span>{{ b.label }}</span><b>{{ b.value }}</b></div>
          </div>
          <div class="gauges"><div class="card"><Chart :spec="gaugeA" /></div><div class="card"><Chart :spec="gaugeB" /></div></div>
          <div class="gauges">
            <div class="card bed wine tight"><span>NON-ICU BEDS OCCUPIED DUE TO COVID</span><b>2.65%</b></div>
            <div class="card bed teal"><span>ICU BEDS OCCUPIED DUE TO COVID</span><b>5.31%</b></div>
          </div>
          <div class="card bed amber"><span>AVERAGE HOSPITALIZATION LENGTH OF STAY (DAYS)</span><b>8.08</b></div>
        </div>
        <div class="col spread">
          <div class="card bed red"><span>CUMULATIVE DEATHS</span><b>172</b></div>
          <div class="card"><Chart :spec="deathsAge" /></div>
          <div class="card"><Chart :spec="deathsMonth" /></div>
        </div>
      </div>

      <div class="dash-head map-head"><Logo /><h3>NORTH DAKOTA COUNTY<br>ANALYSIS</h3><Help /></div>
      <div class="map-row">
        <div class="modes">
          <button v-for="m in mapModes" :key="m" class="card" :class="{ 'red-on': m === mapMode }" @click="mapMode = m">PRESS FOR {{ m }}</button>
        </div>
        <svg class="map" viewBox="0 0 298 178" role="img" aria-label="North Dakota counties">
          <g v-for="c in counties" :key="c[0]"><polygon :points="outline(c[4])" :fill="c[5]" /></g>
          <g v-for="c in counties" :key="c[0]">
            <text class="cname" :x="mx(c[2])" :y="my(c[3] + 6)">{{ c[0] }}</text>
            <text class="cnum" :x="mx(c[2])" :y="my(c[3] + (closeSet.includes(c[0]) ? 35 : 44))">{{ c[1] }}</text>
          </g>
        </svg>
      </div>
    </main>

    <div class="powerbi">
      <strong>Microsoft Power BI</strong>
      <button aria-label="Share"><svg viewBox="0 0 12 12"><path d="M3 4H1v7h8V9" /><path d="M3.5 8.5C3.500 5.500 5 4 7.500 4V1.500L11 5 7.500 8V6C5.500 6 4.300 6.800 3.500 8.500z" /></svg></button>
      <button aria-label="Full screen"><svg viewBox="0 0 12 12"><path d="M1.500 10.500l9-9M7 1.500h3.500V5M1.500 7v3.500H5" /></svg></button>
    </div>

    <section class="serology">
      <h2>Serology Testing</h2>
      <p>Reported serology tests are completed in a laboratory and do not include point of care serology tests. Individuals who complete an antibody and a PCR test maybe be counted in totals for both.</p>
      <table>
        <tbody>
          <tr><td>Detected</td><td>Not Detected</td><td>Total</td></tr>
          <tr><td>377</td><td>8651</td><td>9028</td></tr>
        </tbody>
      </table>
    </section>

    <section class="deaths">
      <h2>Deaths</h2>
      <table>
        <thead><tr><th>Cause</th><th>Cases</th></tr></thead>
        <tbody>
          <tr v-for="d in deaths" :key="d.head"><td><b>{{ d.head }}</b><br><i>{{ d.note }}</i></td><td>{{ d.n }}</td></tr>
          <tr><td><b>Total</b> number of individuals who tested positive and died from any cause while infected with COVID-19.</td><td>172</td></tr>
          <tr><td>&nbsp;</td><td>&nbsp;</td></tr>
          <tr><td><b>Deaths of Individuals Presumed Positive</b><br>Deaths of individuals where COVID-19 was listed as the cause of death on the<br>official death record, but there was not a positive test result. These individuals<br>are presumed positive by the health care provider based on symptoms and/or<br>exposure.</td><td>3</td></tr>
        </tbody>
      </table>
    </section>

    <section class="panels">
      <button v-for="p in panels" :key="p"><span>{{ p }}</span><svg viewBox="0 0 10 10"><path d="M5 0v10M0 5h10" /></svg></button>
    </section>

    <footer>
      <div class="addr">
        Copyright © 2019 <a href="#">North Dakota Department of Health</a><br>600 East Boulevard Ave Bismarck, ND 58505-0200<br>Phone: 701-328-2372<br><a href="#">Contact Us</a>
        <p><a href="#">Intranet</a></p>
      </div>
      <ul>
        <li><a href="#">Accessibility</a></li><li><a href="#">Contact</a></li><li><a href="#">Disclaimer</a></li><li><a href="#">Privacy Policy</a></li><li><a href="#">Security Policy</a></li>
      </ul>
      <div class="brand">
        <Logo tone="white" />
        <div class="social">
          <a href="#" aria-label="Email"><svg viewBox="0 0 18 16"><path fill="#fff" d="M1.500 1.500h15a1.500 1.500 0 0 1 1.500 1.500v10a1.500 1.500 0 0 1-1.500 1.500h-15A1.500 1.500 0 0 1 0 13V3a1.500 1.500 0 0 1 1.500-1.500z" /><path d="M0 5l7.500 5.400q1.500 1 3 0L18 5" fill="none" stroke="#786e66" /></svg></a>
          <a href="#" aria-label="Facebook"><svg viewBox="0 0 16 16"><rect width="16" height="16" rx="2" fill="#fff" /><path fill="#786e66" d="M8.700 16V9.800H6.600V7.400h2.100V5.600c0-2.100 1.300-3.300 3.200-3.300.8 0 1.600.1 1.600.1v2.100h-1.100c-1 0-1.300.6-1.300 1.300v1.600h2.400l-.4 2.400h-2V16z" /></svg></a>
          <a href="#" aria-label="Twitter"><svg viewBox="0 0 16 16"><rect width="16" height="16" rx="2" fill="#fff" /><path fill="#786e66" d="M13.500 4.700l-1.200.3c.4-.3.800-.7.900-1.200l-1.400.5a2.300 2.300 0 0 0-3.900 2.100A6.400 6.400 0 0 1 3.200 4a2.300 2.300 0 0 0 .7 3l-1-.3c0 1.100.8 2 1.800 2.300l-1 .1c.3.900 1.100 1.500 2.100 1.600A4.600 4.600 0 0 1 2.400 11.600a6.500 6.500 0 0 0 10-5.800z" /></svg></a>
          <a href="#" aria-label="YouTube"><svg viewBox="0 0 16 16"><rect width="16" height="16" rx="2" fill="#fff" /><rect x="2" y="3.500" width="12" height="9" rx="2.500" fill="#786e66" /><path fill="#fff" d="M6.700 6l3.400 2-3.400 2z" /></svg></a>
        </div>
      </div>
    </footer>
    <button class="feedback">Feedback (+)</button>
  </div>
</template>

<style>
body { margin: 0; background: #fff; }
.chart { display: block; width: 100%; height: auto; font-family: "Open Sans", "Noto Sans", sans-serif; }
.chart .grid { stroke: #ccc; stroke-width: 1; stroke-dasharray: 1 2; stroke-opacity: .6; }
.chart .faint { stroke-opacity: .2; }
.nd-logo { display: block; width: 134px; font-family: Lato, sans-serif; overflow: visible; }
.l-north { font-size: 9px; font-weight: 400; letter-spacing: 3px; }
.l-name { font-size: 26px; }
.l-dept { font-size: 12px; }
.l-tag { font-size: 8px; }
.l-tm { font-size: 3px; }
.help { display: flex; align-items: center; gap: 3px; color: #888; }
.help p { margin: 0; font-size: 4px; line-height: 5px; text-align: center; white-space: nowrap; }
.help-icon { width: 9px; height: 9px; }
</style>

<style scoped>
.page { position: relative; padding-bottom: 19px; font: 11px/16px "Open Sans", "Noto Sans", sans-serif; color: #14213d; background: #fff; }
a { color: #1a7bb0; text-decoration: none; }
button, input, select { font-family: inherit; }
h1, h2, h3, p { margin: 0; }

.state-bar { display: flex; height: 21px; border-bottom: 1px solid #c9c9c9; align-items: center; padding-left: 3px; }
.state-name { font-size: 17px; line-height: 20px; color: #555; width: 132px; }
.ndgov { font-size: 11px; line-height: 12px; color: #2c62a5; padding-right: 2px; align-self: flex-start; margin-top: 3px; }
.portal { font: 8px/8px "Liberation Sans", Arial, sans-serif; color: #444; border-left: 1px solid #aaa; padding-left: 2px; margin-top: 3px; }
.site-head { display: flex; justify-content: space-between; height: 50px; padding: 6px 42px 0 22px; background: #eee; }
.search { display: flex; gap: 3px; padding-top: 13px; }
.search input { box-sizing: border-box; width: 151px; height: 23px; border: 1px solid #ccc; border-radius: 3px; padding: 0 8px; font-size: 11px; background: #fff; }
.search input::placeholder { color: #757575; }
.search button { width: 27px; height: 23px; border: 0; border-radius: 3px; background: #d54827; padding: 0; display: grid; place-items: center; }
.search svg { width: 11px; height: 11px; fill: none; stroke: #fff; stroke-width: 2; }
.nav { display: flex; flex-wrap: wrap; padding: 0 22px; }
.nav a { font-size: 8px; line-height: 27px; padding: 0 10px; color: #111; }
.nav a.on { background: #d54827; color: #fff; }
.caret { display: inline-block; border: 3px solid transparent; border-top: 3px solid currentColor; border-bottom: 0; margin-left: 4px; vertical-align: middle; }
.crumbs { display: flex; padding: 7px 22px 0; color: #666; }
.crumbs span { width: 20px; text-align: center; }
.crumbs em { font-style: normal; }
h1 { position: relative; margin: 19px 22px 0; padding-bottom: 5px; border-bottom: 1px solid #000; font-size: 26px; line-height: 30px; font-weight: 400; color: #0e1a33; }
h1::after { content: ""; position: absolute; right: 21px; top: 100%; border: 8px solid transparent; border-top: 5px solid #000; border-bottom: 0; }
.intro { padding: 17px 20px 0 32px; }
.intro p { margin-bottom: 7px; }
.ext { width: 7px; height: 7px; margin-left: 1px; fill: none; stroke: #888; }

.dash { padding: 24px 40px 0 39px; }
.lead { position: relative; }
.level { font-size: 18px; line-height: 24px; text-align: center; color: #3b3430; }
.second { margin-top: 23px; padding-left: 3px; }
.updated { position: absolute; right: 10px; top: -4px; display: flex; flex-direction: column; align-items: center; line-height: 12px; color: #222; font-size: 6px; }
.updated b { font-size: 5px; line-height: 9px; }
.dash-head { display: grid; grid-template-columns: 1fr auto 1fr; height: 42px; margin-top: 11px; }
.dash-head .nd-logo { width: 97px; margin-left: 14px; }
.dash-head h3 { font-size: 11px; line-height: 15px; color: #3b3430; text-align: center; white-space: nowrap; }
.dash-head .help { justify-self: end; align-self: end; margin: 0 6px 4px 0; }
.dash-head.first { height: 37px; margin-top: 14px; }
.dash-head.first .help { margin-bottom: 2px; }
.dash-head.first h3 { line-height: 9px; padding-bottom: 1px; }
.trends-head { margin-top: 12px; }
.trends-head h3 { padding-top: 8px; color: #222; }
.demo-head .nd-logo { margin-left: 18px; }
.demo-head h3 { padding-left: 4px; }
.map-head { margin-top: 9px; }
.map-head .nd-logo { margin-left: 20px; }
.map-head h3 { padding: 3px 0 0 6px; }
.map-head .help { margin: 0 1px 15px 0; }
.mid-head h3 { text-align: center; }
.filters { display: flex; gap: 12px; padding-left: 32px; font-size: 5px; line-height: 8px; color: #333; }
.fact { display: flex; flex-direction: column; align-items: center; padding-top: 3px; }
.fact b { font-weight: 400; color: #dd6b55; }
.county { display: flex; flex-direction: column; align-items: center; color: #666; }
.county label { line-height: 10px; }
.county select { width: 55px; height: 12px; border: 1px solid #e4e4e4; background: #fff; font-size: 4px; color: #444; padding: 0 2px; box-sizing: border-box; }

.card { box-sizing: border-box; background: #fff; border: 0; border-radius: 3px; box-shadow: inset 0 0 0 1px #b0b0b0, 0 0 4px rgba(0, 0, 0, .4); }
.status { display: grid; grid-template-columns: 81fr 281fr 81fr; gap: 4px; height: 210px; }
.stack { display: grid; gap: 3px; grid-template-rows: 17fr 15fr 15fr 15fr 15fr 14fr 19fr 19fr 14fr 20fr 17fr; }
.centre { display: grid; gap: 4px; grid-template-rows: 23fr 76fr 76fr 23fr; }
.stat, .now { display: flex; flex-direction: column; align-items: center; justify-content: center; min-height: 0; overflow: hidden; font-size: 4px; line-height: 6px; color: #333; white-space: nowrap; }
.stat b { font-weight: 400; font-size: 4px; }
.stat.mid b { font-size: 6px; line-height: 8px; }
.stat.big { font-size: 8px; font-weight: 700; color: #111; }
.stat.head { font-size: 5px; font-weight: 700; color: #111; }
.stat.tight span { font-size: 3px; }
.now { font-size: 5px; line-height: 8px; }
.now b { font-size: 9px; line-height: 12px; color: #dd6b55; }
.red b { color: #dd6048; }
.amber b { color: #faa62a; }
.green b { color: #6f9748; }
.teal b { color: #0a7481; }
.dark b { color: #222; }
.rose b { color: #bb5d62; }
.sea b { color: #308b96; }
.wine b { color: #a83238; }
.pair { display: grid; grid-template-columns: 1fr 1fr; gap: 4px; }
.range { padding: 4px 5px; }
.dates { display: flex; gap: 2px; }
.dates input { box-sizing: border-box; width: 23px; height: 8px; border: 1px solid #eee; padding: 0 2px; font-size: 4px; color: #333; background: #fff; }
.dates .dim { color: #bbb; }
.range input[type=range] { display: block; appearance: none; width: 100%; height: 1px; margin: 4px 0 0; background: #000; }
.range input[type=range]::-webkit-slider-thumb { appearance: none; width: 6px; height: 6px; border: 1px solid #333; border-radius: 50%; background: #fff; }

.trends { display: grid; grid-template-columns: 160fr 121fr 160fr; gap: 4px; padding-top: 1px; }
.col { display: flex; flex-direction: column; gap: 4px; min-width: 0; }
.toggle { display: grid; grid-template-columns: 1fr 1fr; gap: 4px; flex: 1; margin-top: -1px; }
.toggle button, .halves button, .modes button { font-size: 5px; line-height: 6px; color: #222; padding: 0; white-space: nowrap; }
.card.amber-on { background: #faa21b; }
.card.green-on { background: #6f9748; color: #111; }
.card.red-on { background: #d54827; color: #3a0d04; }
.thirds { display: grid; grid-template-columns: 1fr 1fr 1fr; gap: 6px; margin-top: 4px; }
.demo { margin: 0 0 0 4px; grid-template-columns: 146fr 146fr 143fr; gap: 5px; }
.halves { display: grid; grid-template-columns: 1fr 1fr; gap: 3px; margin: 4px 1px 0 4px; height: 14px; }
.halves + .dash-head { margin-top: 12px; }

.hosp { display: grid; grid-template-columns: 144fr 154fr 143fr; gap: 4px 3px; margin-left: 4px; }
.bar-title { height: 15px; display: grid; place-items: center; font-size: 8px; font-weight: 700; color: #111; line-height: 10px; }
.wide { grid-column: span 2; }
.spread { justify-content: space-between; }
.beds { display: grid; grid-template-columns: 1fr 1fr 1fr; gap: 4px; }
.gauges { display: grid; grid-template-columns: 1fr 1fr; gap: 4px; }
.bed { height: 24px; display: flex; flex-direction: column; align-items: center; justify-content: space-between; text-align: center; font-size: 4px; line-height: 6px; color: #333; padding: 2px 5px; }
.bed b { font-weight: 400; font-size: 8px; line-height: 9px; }
.bed.tight { padding: 2px 0; }
.map-row { display: flex; gap: 19px; padding: 0 0 0 19px; align-items: flex-start; }
.modes { display: grid; gap: 7px; width: 80px; padding-top: 31px; flex: none; }
.modes button { height: 16px; font-size: 5px; }
.map { flex: none; width: 298px; height: 178px; font-family: "Open Sans", "Noto Sans", sans-serif; }
.map polygon { stroke: #8d6a62; stroke-opacity: .55; stroke-width: .4; }
.map text { text-anchor: middle; fill: #fff; }
.cname { font-size: 4px; font-weight: 700; }
.cnum { font-size: 5px; opacity: .75; }

.powerbi { display: flex; align-items: center; height: 24px; margin: 1042px 32px 0; padding: 0 8px; background: #eaeaea; border-top: 1px solid #c8c8c8; color: #111; }
.powerbi strong { flex: 1; font-size: 9px; font-weight: 600; }
.powerbi button { border: 0; background: none; padding: 0; margin-left: 16px; height: 11px; }
.powerbi svg { display: block; width: 11px; height: 11px; fill: none; stroke: #111; }

.serology { padding: 30px 32px 0; }
.serology h2 { font-size: 13px; line-height: 18px; }
.serology p { margin: 5px 0 6px; font: italic 9px/18px "Liberation Sans", Arial, sans-serif; }
.serology table { width: 337px; border-collapse: collapse; border: 1px solid #222; table-layout: fixed; }
.serology td { border: 1px solid #777; padding: 0; height: 16px; }
.serology td:first-child { width: 111px; }
.serology td:last-child { width: 62px; }
.deaths { padding: 48px 32px 0; }
.deaths h2 { font-size: 18px; line-height: 24px; font-weight: 400; margin: 0 0 5px -10px; }
.deaths table { width: 100%; border-collapse: collapse; line-height: 15px; }
.deaths td, .deaths th { border: 1px solid #dcdcdc; padding: 5px 0 5px 6px; text-align: left; vertical-align: top; }
.deaths th { border-bottom-width: 2px; }
.deaths th:last-child { width: 34px; }
.panels { display: grid; gap: 20px; padding: 34px 32px 21px; }
.panels button { display: flex; justify-content: space-between; align-items: center; height: 45px; padding: 0 17px; border: 1px solid #ddd; border-bottom-width: 2px; border-radius: 3px; background: #f4f4f4; font-size: 11px; font-weight: 700; color: #333; white-space: nowrap; }
.panels svg { width: 10px; height: 10px; fill: none; stroke: #1a7bb0; stroke-width: 2; flex: none; }

footer { display: flex; box-sizing: border-box; height: 191px; padding: 24px 23px 0; background: #786e66; color: #fff; font-size: 9px; line-height: 16px; }
footer a { color: #fff; }
.addr { width: 140px; }
.addr a { text-decoration: underline; }
.addr p { margin-top: 30px; }
footer ul { list-style: none; margin: 0 0 0 31px; padding: 0; width: 136px; display: flex; flex-wrap: wrap; align-content: flex-start; }
footer li + li::before { content: ""; display: inline-block; height: 9px; border-left: 1px solid #fff; margin: 0 7px 0 2px; vertical-align: middle; }
footer li { margin-right: 8px; }
footer li:nth-child(even) { margin-right: 0; }
.brand { margin-left: 23px; }
.brand .nd-logo { margin-left: 23px; }
.social { display: flex; gap: 9px; padding: 7px 0 0 6px; }
.social svg { display: block; width: auto; height: 16px; }
.feedback { position: absolute; left: 7px; bottom: 2px; width: 86px; height: 23px; border: 0; border-radius: 5px 5px 0 0; background: #d54827; color: #fff; font-size: 10px; font-weight: 700; padding: 0; }
</style>
